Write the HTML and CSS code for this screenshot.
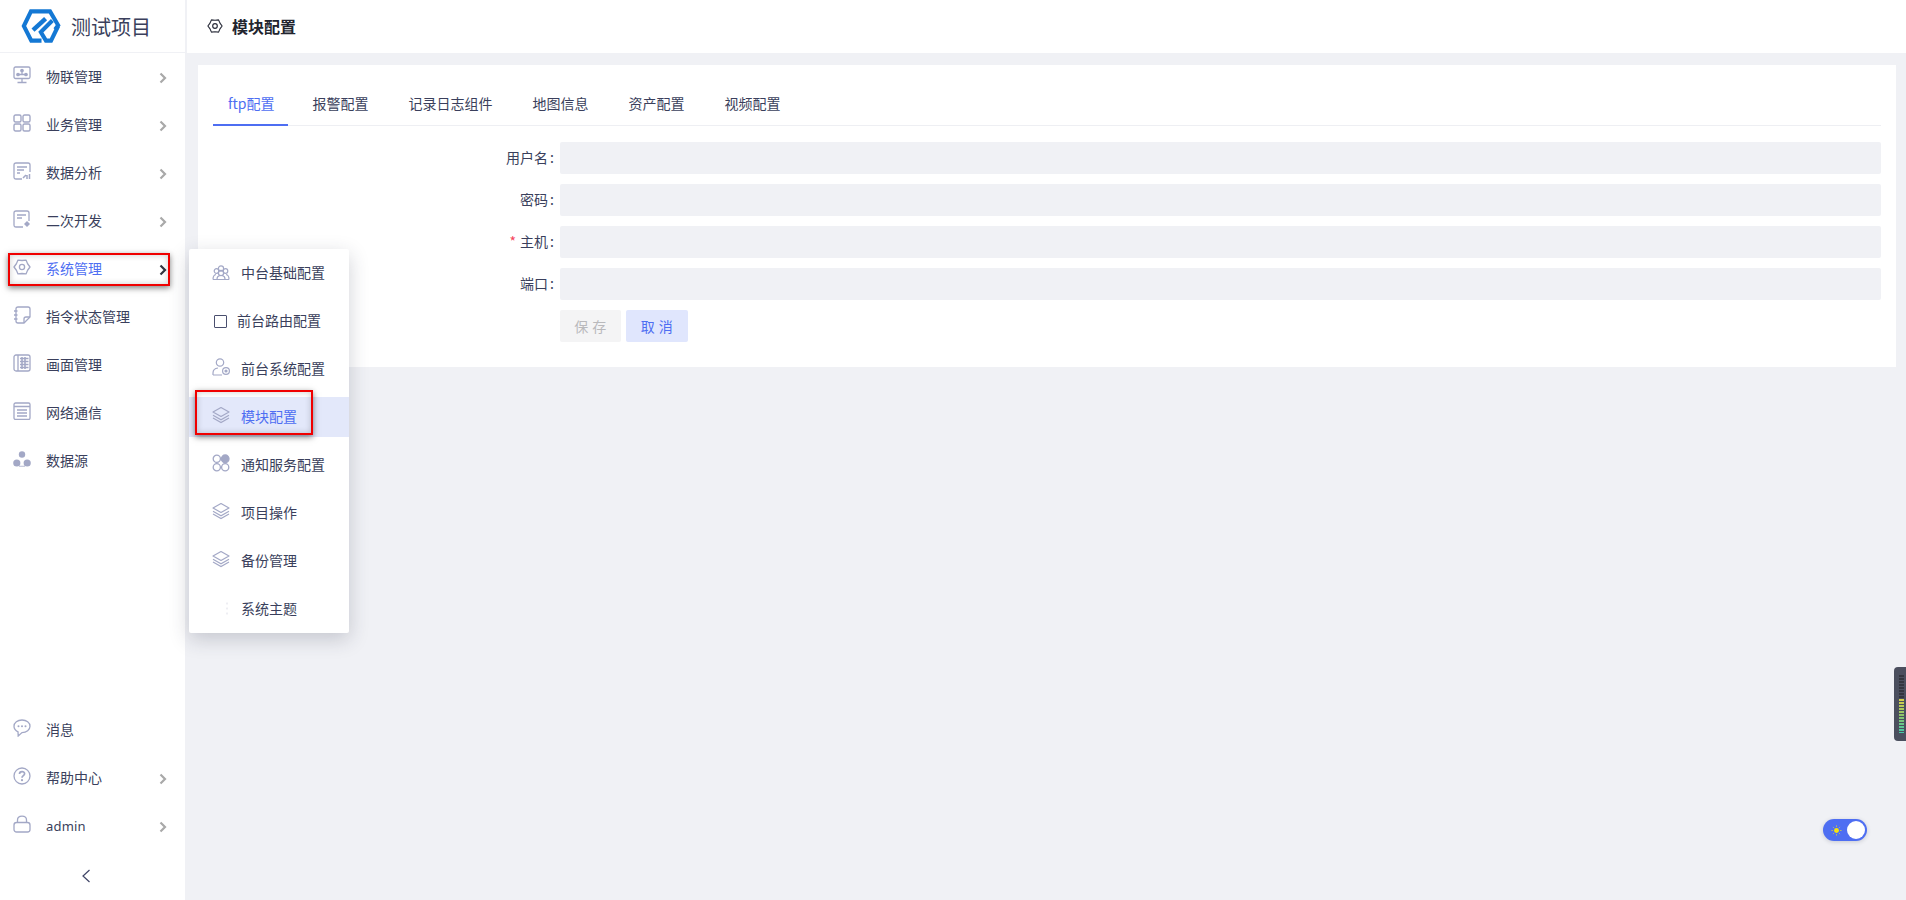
FILE: index.html
```html
<!DOCTYPE html>
<html lang="zh-CN">

<head>
  <meta charset="UTF-8" />
  <meta name="viewport" content="width=device-width, initial-scale=1.0" />
  <title>模块配置</title>
  <link rel="stylesheet" href="styles.css">
</head>

<body>

  <svg class="defs" xmlns="http://www.w3.org/2000/svg">
    <symbol id="i-chevron" viewBox="0 0 8 12">
      <path d="M1.5 1.5 L6 6 L1.5 10.5" fill="none" stroke="currentColor" stroke-width="2.2" />
    </symbol>
    <symbol id="i-gear" viewBox="0 0 18 18">
      <path d="M17 9 L14.6 5.75 L13 2.1 L9 2.5 L5 2.1 L3.4 5.75 L1 9 L3.4 12.25 L5 15.9 L9 15.5 L13 15.9 L14.6 12.25 Z" fill="none" stroke="currentColor" stroke-width="1.3" stroke-linejoin="round" />
      <circle cx="9" cy="9" r="2.6" fill="none" stroke="currentColor" stroke-width="1.3" />
    </symbol>
    <symbol id="i-layers" viewBox="0 0 18 18">
      <path d="M9 1.5 L17 6 L9 10.5 L1 6 Z" fill="none" stroke="currentColor" stroke-width="1.2" stroke-linejoin="round" />
      <path d="M1 9.2 L9 13.7 L17 9.2" fill="none" stroke="currentColor" stroke-width="1.2" />
      <path d="M1 12 L9 16.5 L17 12" fill="none" stroke="currentColor" stroke-width="1.2" />
    </symbol>
  </svg>

  <div class="app">

    <aside class="sidebar">
      <div class="brand">
        <svg class="brand-logo" viewBox="0 0 117 100" xmlns="http://www.w3.org/2000/svg" fill="none" stroke="#1478d4" stroke-width="12">
          <path d="M60 93 H30 L8 50 L29 7 H85 L109 48 L100 60" />
          <path d="M72 28 L35 62" stroke-width="13" />
          <path d="M92 34 L58 68 L73 93 H88 L109 50" />
        </svg>
        <span class="brand-name">测试项目</span>
      </div>

      <nav class="menu">
        <a class="menu-item">
          <svg class="menu-icon" viewBox="0 0 18 18" fill="none" stroke="currentColor" stroke-width="1.3">
            <rect x="1" y="1" width="16" height="11.5" rx="1.5" />
            <path d="M9 12.5 V16 M4.5 16.5 H13.5 M5 8.5 H13 M9 5 V8.5" />
            <circle cx="9" cy="4.5" r="1.2" fill="currentColor" />
            <circle cx="5" cy="8.5" r="1.2" fill="currentColor" />
            <circle cx="13" cy="8.5" r="1.2" fill="currentColor" />
          </svg>
          <span>物联管理</span>
          <svg class="chevron"><use href="#i-chevron" /></svg>
        </a>
        <a class="menu-item">
          <svg class="menu-icon" viewBox="0 0 18 18" fill="none" stroke="currentColor" stroke-width="1.4">
            <rect x="1" y="1" width="7" height="7" rx="1.5" />
            <rect x="10" y="1" width="7" height="7" rx="1.5" />
            <rect x="1" y="10" width="7" height="7" rx="1.5" />
            <rect x="10" y="10" width="7" height="7" rx="1.5" />
          </svg>
          <span>业务管理</span>
          <svg class="chevron"><use href="#i-chevron" /></svg>
        </a>
        <a class="menu-item">
          <svg class="menu-icon" viewBox="0 0 18 18" fill="none" stroke="currentColor" stroke-width="1.3">
            <path d="M9 17 H3 Q1 17 1 15 V3 Q1 1 3 1 H15 Q17 1 17 3 V10" />
            <path d="M4 5 H14 M4 8 H11 M4 11 H7" />
            <path d="M10 16 L13 13 M14 17 V13 M16.5 17 V12" stroke-width="1.5" />
          </svg>
          <span>数据分析</span>
          <svg class="chevron"><use href="#i-chevron" /></svg>
        </a>
        <a class="menu-item">
          <svg class="menu-icon" viewBox="0 0 18 18" fill="none" stroke="currentColor" stroke-width="1.3">
            <path d="M10 17 H3 Q1 17 1 15 V3 Q1 1 3 1 H14 Q16 1 16 3 V11" />
            <path d="M4 5 H13 M4 8 H9" />
            <path d="M14 11 L17 14 L14 17 L11 14 Z" fill="currentColor" stroke="none" />
          </svg>
          <span>二次开发</span>
          <svg class="chevron"><use href="#i-chevron" /></svg>
        </a>
        <a class="menu-item is-active">
          <svg class="menu-icon"><use href="#i-gear" /></svg>
          <span>系统管理</span>
          <svg class="chevron"><use href="#i-chevron" /></svg>
          <div class="mark mark-menu"></div>
        </a>
        <a class="menu-item">
          <svg class="menu-icon" viewBox="0 0 18 18" fill="none" stroke="currentColor" stroke-width="1.3">
            <path d="M3 3 Q3 1 5 1 H15 Q17 1 17 3 V11 L11 17 H5 Q3 17 3 15 Z" />
            <path d="M17 11 H13 Q11 11 11 13 V17" />
            <path d="M1 5 H4.5 M1 9 H4.5 M1 13 H4.5" stroke-width="1.5" />
          </svg>
          <span>指令状态管理</span>
        </a>
        <a class="menu-item">
          <svg class="menu-icon" viewBox="0 0 18 18" fill="none" stroke="currentColor" stroke-width="1.3">
            <rect x="1" y="1" width="16" height="16" rx="2" />
            <path d="M5 1 V17" />
            <path d="M7 4.5 H15.5 M7 7.5 H15.5 M7 10.5 H15.5 M7 13.5 H15.5 M9 3 V15 M12 3 V15" stroke-width="1.6" />
          </svg>
          <span>画面管理</span>
        </a>
        <a class="menu-item">
          <svg class="menu-icon" viewBox="0 0 18 18" fill="none" stroke="currentColor" stroke-width="1.3">
            <rect x="1" y="1" width="16" height="16.5" rx="1.5" />
            <path d="M1 4.5 H17 M4 8 H14 M4 11 H14 M4 14 H14" />
          </svg>
          <span>网络通信</span>
        </a>
        <a class="menu-item">
          <svg class="menu-icon" viewBox="0 0 18 18" fill="currentColor">
            <circle cx="9" cy="4.5" r="3.2" />
            <circle cx="3.8" cy="13" r="3.6" />
            <circle cx="14.2" cy="13" r="3.6" />
            <path d="M6 15.8 H12 V16.6 H6 Z" />
          </svg>
          <span>数据源</span>
        </a>
      </nav>

      <nav class="menu menu-bottom">
        <a class="menu-item">
          <svg class="menu-icon" viewBox="0 0 18 18" fill="none" stroke="currentColor" stroke-width="1.3">
            <path d="M9 1 C13.5 1 17 3.6 17 7.3 C17 11 13.5 13.6 9 13.6 L5.2 17 L5 12.8 C2.6 11.7 1 9.7 1 7.3 C1 3.6 4.5 1 9 1 Z" />
            <circle cx="5.5" cy="7.3" r="1" fill="currentColor" stroke="none" />
            <circle cx="9" cy="7.3" r="1" fill="currentColor" stroke="none" />
            <circle cx="12.5" cy="7.3" r="1" fill="currentColor" stroke="none" />
          </svg>
          <span>消息</span>
        </a>
        <a class="menu-item">
          <svg class="menu-icon" viewBox="0 0 18 18" fill="none" stroke="currentColor" stroke-width="1.3">
            <circle cx="9" cy="9" r="8" />
            <path d="M6.5 7 C6.5 3.8 11.6 3.8 11.6 6.8 C11.6 8.7 9 8.6 9 10.8" stroke-width="1.7" />
            <circle cx="9" cy="13.2" r="1.1" fill="currentColor" stroke="none" />
          </svg>
          <span>帮助中心</span>
          <svg class="chevron"><use href="#i-chevron" /></svg>
        </a>
        <a class="menu-item">
          <svg class="menu-icon" viewBox="0 0 18 18" fill="none" stroke="currentColor" stroke-width="1.3">
            <rect x="1" y="7.5" width="16" height="9.5" rx="2.5" />
            <path d="M4.5 7.5 V5 C4.5 -0.3 13.5 -0.3 13.5 5 V7.5" />
          </svg>
          <span class="menu-latin">admin</span>
          <svg class="chevron"><use href="#i-chevron" /></svg>
        </a>
      </nav>

      <div class="collapse">
        <svg viewBox="0 0 10 14" width="10" height="14">
          <path d="M8.5 1 L2 7 L8.5 13" fill="none" stroke="#3f4466" stroke-width="1.2" />
        </svg>
      </div>
    </aside>

    <main class="main">
      <header class="topbar">
        <svg class="topbar-icon"><use href="#i-gear" /></svg>
        <h1>模块配置</h1>
      </header>

      <section class="card">
        <div class="tabs">
          <a class="tab is-active">ftp配置</a>
          <a class="tab">报警配置</a>
          <a class="tab">记录日志组件</a>
          <a class="tab">地图信息</a>
          <a class="tab">资产配置</a>
          <a class="tab">视频配置</a>
        </div>

        <form class="form">
          <div class="form-row">
            <label>用户名<span class="colon">:</span></label>
            <input type="text">
          </div>
          <div class="form-row">
            <label>密码<span class="colon">:</span></label>
            <input type="password">
          </div>
          <div class="form-row">
            <label><em>*</em>主机<span class="colon">:</span></label>
            <input type="text">
          </div>
          <div class="form-row">
            <label>端口<span class="colon">:</span></label>
            <input type="text">
          </div>
          <div class="form-row">
            <label></label>
            <button type="button" class="btn btn-save">保 存</button>
            <button type="button" class="btn btn-cancel">取 消</button>
          </div>
        </form>
      </section>
    </main>
  </div>

  <!-- popup submenu of 系统管理 -->
  <div class="submenu">
    <a class="submenu-item">
      <svg class="submenu-icon" viewBox="0 0 18 16" fill="none" stroke="currentColor" stroke-width="1.2">
        <circle cx="9" cy="3.5" r="2.6" />
        <circle cx="4.5" cy="6" r="2.3" />
        <circle cx="13.5" cy="6" r="2.3" />
        <circle cx="9" cy="8" r="2.6" />
        <path d="M1 14.5 Q1 10 4 9.5 M17 14.5 Q17 10 14 9.5 M1 14.5 H17 M5 14 Q5 11 8 10.5 M13 14 Q13 11 10 10.5" />
      </svg>
      <span>中台基础配置</span>
    </a>
    <a class="submenu-item submenu-plain">
      <span class="square"></span>
      <span>前台路由配置</span>
    </a>
    <a class="submenu-item">
      <svg class="submenu-icon submenu-icon-tall" viewBox="0 0 18 18" fill="none" stroke="currentColor" stroke-width="1.2">
        <circle cx="8" cy="4.5" r="3.7" />
        <path d="M1 17 V15 Q1 10.5 6 10 M1 17 H10" />
        <circle cx="14" cy="13" r="3.4" />
        <circle cx="14" cy="13" r="1" fill="currentColor" />
      </svg>
      <span>前台系统配置</span>
    </a>
    <a class="submenu-item is-active">
      <svg class="submenu-icon submenu-icon-tall"><use href="#i-layers" /></svg>
      <span>模块配置</span>
      <div class="mark mark-submenu"></div>
    </a>
    <a class="submenu-item">
      <svg class="submenu-icon submenu-icon-tall" viewBox="0 0 18 18" fill="none" stroke="currentColor" stroke-width="1.3">
        <circle cx="4.8" cy="4.8" r="3.6" />
        <circle cx="13.2" cy="4.8" r="3.8" fill="currentColor" />
        <circle cx="4.8" cy="13.2" r="3.6" />
        <circle cx="13.2" cy="13.2" r="3.6" />
      </svg>
      <span>通知服务配置</span>
    </a>
    <a class="submenu-item">
      <svg class="submenu-icon submenu-icon-tall"><use href="#i-layers" /></svg>
      <span>项目操作</span>
    </a>
    <a class="submenu-item">
      <svg class="submenu-icon submenu-icon-tall"><use href="#i-layers" /></svg>
      <span>备份管理</span>
    </a>
    <a class="submenu-item">
      <span class="faint-icon"></span>
      <span>系统主题</span>
    </a>
  </div>

  <div class="meter-tab">
    <div class="meter"></div>
  </div>

  <div class="theme-switch">
    <svg class="sun" viewBox="0 0 12 12">
      <circle cx="6" cy="6" r="2.7" fill="#f7e30f" />
      <path d="M6 .5 V2 M6 10 V11.5 M.5 6 H2 M10 6 H11.5 M2.1 2.1 L3 3 M9 9 L9.9 9.9 M2.1 9.9 L3 9 M9 3 L9.9 2.1" stroke="#f7e30f" stroke-width=".8" />
    </svg>
    <span class="knob"></span>
  </div>

</body>

</html>
```

FILE: styles.css
```css
* {
  box-sizing: border-box;
}

body {
  margin: 0;
  height: 100vh;
  overflow: hidden;
  position: relative;
  font-family: "Noto Sans CJK SC", "Noto Sans", sans-serif;
  font-size: 14px;
  color: #3a3f5c;
  background: #f0f1f5;
}

a {
  color: inherit;
  text-decoration: none;
}

.defs {
  display: none;
}

.app {
  display: flex;
  height: 100%;
}

/* left menu */
.sidebar {
  width: 185px;
  flex-shrink: 0;
  display: flex;
  flex-direction: column;
  background: #ffffff;
}

.brand {
  height: 53px;
  flex-shrink: 0;
  display: flex;
  align-items: center;
  padding-left: 21px;
  gap: 10px;
  border-bottom: 1px solid #f0f1f5;
}

.brand-logo {
  width: 40px;
  height: 34px;
}

.brand-name {
  font-size: 20px;
  color: #3a3f5c;
}

.menu-item {
  height: 48px;
  display: flex;
  align-items: center;
  padding: 0 18px 2px 13px;
  gap: 15px;
  position: relative;
  color: #3a3f5c;
}

.menu-icon {
  width: 18px;
  height: 18px;
  margin-top: -2px;
  color: #a3a8c6;
}

.menu-latin {
  font-family: "Noto Sans", sans-serif;
  font-size: 13px;
  letter-spacing: 0.2px;
  margin-top: 2px;
}

.chevron {
  width: 8px;
  height: 12px;
  margin-top: 4px;
  margin-left: auto;
  color: #a9a9a9;
}

.menu-item.is-active {
  color: #4e6ef2;
}

.menu-item.is-active .chevron {
  color: #33353f;
}

.menu-bottom {
  margin-top: auto;
}

.collapse {
  height: 50px;
  flex-shrink: 0;
  display: flex;
  align-items: center;
  justify-content: center;
  padding: 2px 14px 0 0;
}

/* red annotation boxes */
.mark {
  position: absolute;
  border: 2px solid #f00000;
  box-shadow: 0 2px 6px rgba(0, 0, 0, 0.5), inset 0 0 6px rgba(0, 0, 0, 0.2);
}

.mark-menu {
  left: 8px;
  top: 8px;
  width: 162px;
  height: 33px;
}

.mark-submenu {
  left: 6px;
  top: -7px;
  width: 118px;
  height: 45px;
}

/* main area */
.main {
  flex: 1;
  min-width: 0;
}

.topbar {
  height: 53px;
  margin-left: 2px;
  display: flex;
  align-items: center;
  padding: 0 0 2px 20px;
  gap: 9px;
  background: #ffffff;
}

.topbar-icon {
  width: 16px;
  height: 16px;
  color: #2a2d3a;
}

.topbar h1 {
  margin: 0;
  font-size: 16px;
  font-weight: 700;
  color: #22242e;
}

.card {
  margin: 12px 10px 0 13px;
  padding: 21px 15px 25px;
  background: #ffffff;
}

.tabs {
  display: flex;
  gap: 10px;
  height: 40px;
  border-bottom: 1px solid #eeeff3;
}

.tab {
  height: 40px;
  padding: 0 15px;
  line-height: 34px;
  color: #3a3f5c;
  white-space: nowrap;
}

.tab.is-active {
  padding-right: 13px;
  color: #4e6ef2;
  border-bottom: 2px solid #4e6ef2;
}

.form {
  margin-top: 16px;
}

.form-row {
  display: flex;
  align-items: center;
  margin-bottom: 10px;
}

.form-row:last-child {
  margin-bottom: 0;
}

.form-row label {
  width: 347px;
  flex-shrink: 0;
  padding: 0 6px 2px 0;
  text-align: right;
  color: #3a3f5c;
}

.form-row label em {
  font-style: normal;
  color: #f5455c;
  margin-right: 4px;
}

.colon {
  margin-left: 2px;
}

.form-row input {
  flex: 1;
  height: 32px;
  border: none;
  border-radius: 2px;
  background: #f0f1f5;
}

.btn {
  width: 61px;
  height: 32px;
  border: none;
  border-radius: 2px;
  padding: 0;
  font-family: inherit;
  font-size: 14px;
  letter-spacing: 0.5px;
}

.btn-save {
  background: #f4f4f5;
  color: #b9b9bc;
}

.btn-cancel {
  width: 62px;
  margin-left: 5px;
  background: #e0e6fd;
  color: #4e6ef2;
}

/* popup */
.submenu {
  position: absolute;
  left: 189px;
  top: 249px;
  width: 160px;
  padding: 4px 0;
  background: #ffffff;
  border-radius: 2px;
  box-shadow: 0 6px 20px rgba(40, 44, 70, 0.22);
}

.submenu-item {
  height: 40px;
  margin-bottom: 8px;
  padding: 0 0 2px 23px;
  display: flex;
  align-items: center;
  gap: 11px;
  position: relative;
  color: #3a3f5c;
}

.submenu-item:last-child {
  margin-bottom: 0;
}

.submenu-item.is-active {
  background: #e3e8fa;
  color: #4e6ef2;
}

.submenu-icon {
  width: 18px;
  height: 16px;
  margin-top: 2px;
  color: #a3a8c6;
}

.submenu-icon-tall {
  height: 18px;
  margin-top: -2px;
}

.submenu-plain {
  gap: 10px;
  padding-left: 25px;
}

.square {
  width: 13px;
  height: 13px;
  margin-top: 2px;
  border: 1.5px solid #4a4f6e;
  border-radius: 1px;
}

.faint-icon {
  width: 18px;
  height: 14px;
  background: radial-gradient(circle, #eeeef3 0 1px, transparent 1.2px) 14px 0 / 2px 5px repeat-y;
}

/* right edge widget */
.meter-tab {
  position: absolute;
  right: 0;
  top: 667px;
  width: 12px;
  height: 74px;
  padding: 8px 2px 8px 5px;
  background: #4b4f5e;
  border-radius: 4px 0 0 4px;
}

.meter {
  height: 100%;
  background:
    repeating-linear-gradient(to bottom, transparent 0 2px, #4b4f5e 2px 3px),
    linear-gradient(to bottom, #34363f 0 40%, #d6cf4a 42%, #8ec46a 70%, #45c9a8 100%);
}

.theme-switch {
  position: absolute;
  left: 1823px;
  top: 819px;
  width: 44px;
  height: 22px;
  display: flex;
  align-items: center;
  justify-content: space-between;
  padding: 0 2px 0 8px;
  border-radius: 11px;
  background: #4e6ef2;
  box-shadow: 0 1px 4px rgba(40, 44, 70, 0.2);
}

.sun {
  width: 11px;
  height: 11px;
}

.knob {
  width: 18px;
  height: 18px;
  border-radius: 50%;
  background: #ffffff;
}
```
